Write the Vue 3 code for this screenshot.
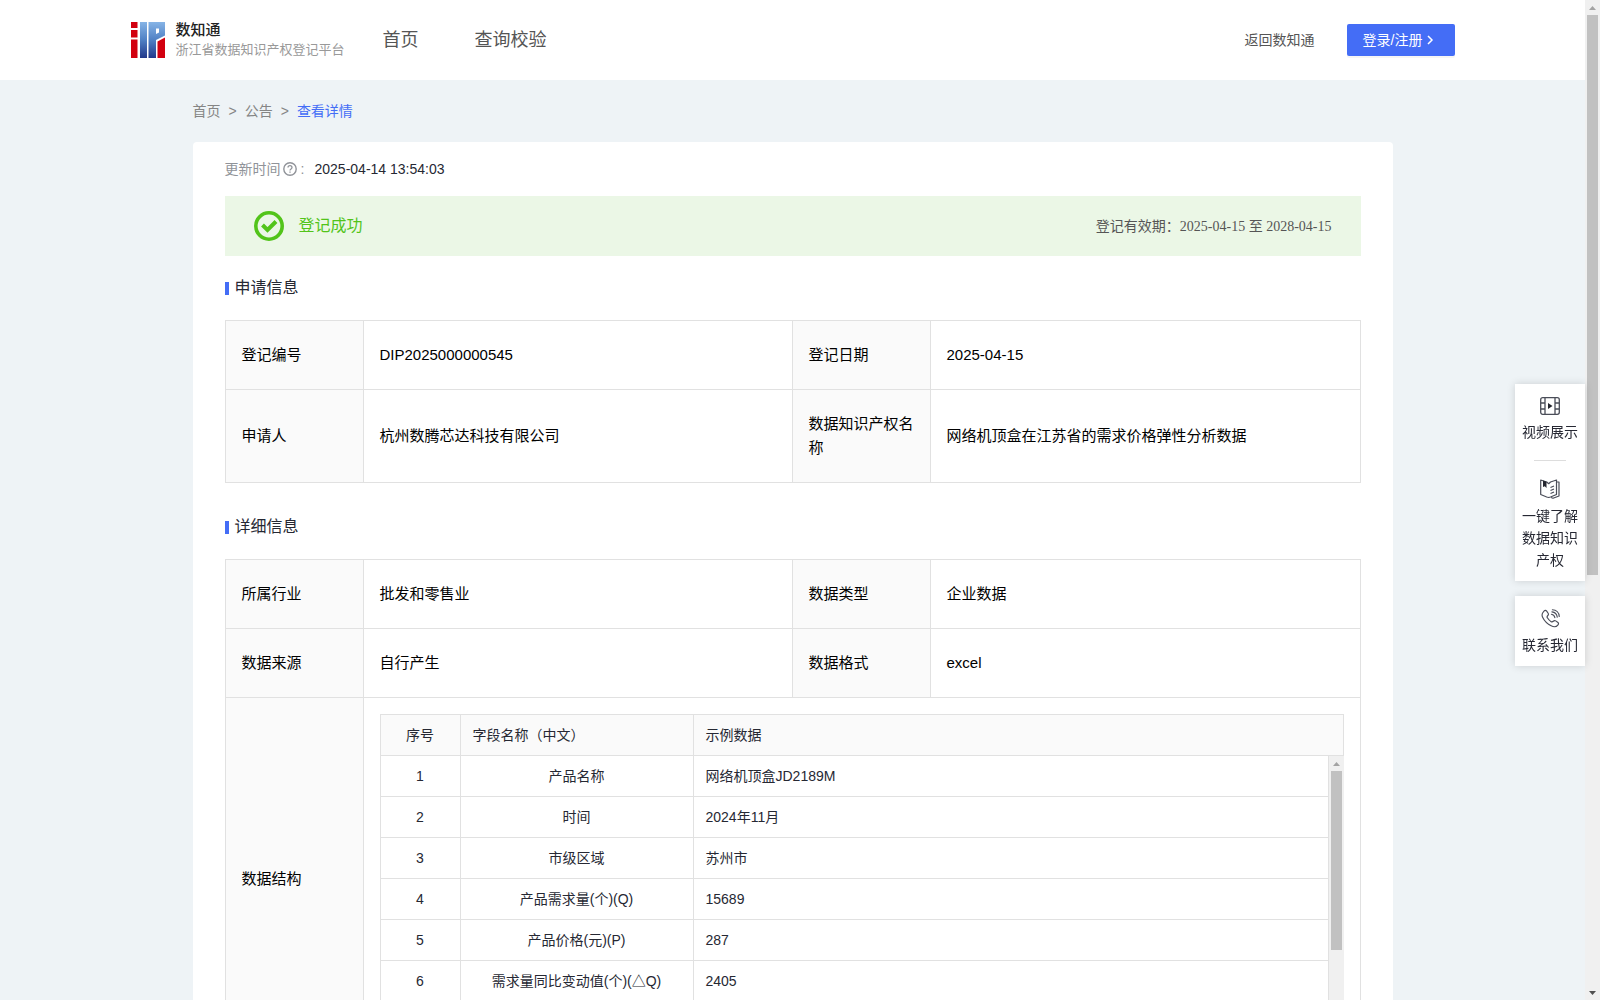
<script setup>
const applyRows = [
  [
    { label: '登记编号', value: 'DIP2025000000545' },
    { label: '登记日期', value: '2025-04-15' },
  ],
  [
    { label: '申请人', value: '杭州数腾芯达科技有限公司' },
    { label: '数据知识产权名称', value: '网络机顶盒在江苏省的需求价格弹性分析数据' },
  ],
]
const detailRows = [
  [
    { label: '所属行业', value: '批发和零售业' },
    { label: '数据类型', value: '企业数据' },
  ],
  [
    { label: '数据来源', value: '自行产生' },
    { label: '数据格式', value: 'excel' },
  ],
]
const fields = [
  ['产品名称', '网络机顶盒JD2189M'],
  ['时间', '2024年11月'],
  ['市级区域', '苏州市'],
  ['产品需求量(个)(Q)', '15689'],
  ['产品价格(元)(P)', '287'],
  ['需求量同比变动值(个)(△Q)', '2405'],
]
</script>

<template>
  <div class="shell">
    <div class="page">
      <header class="header">
        <div class="header-inner">
          <a class="brand" href="#">
            <svg class="logo" width="34" height="36" viewBox="0 0 34 36">
              <defs>
                <linearGradient id="blue" x1="0" y1="0" x2="0" y2="36" gradientUnits="userSpaceOnUse">
                  <stop offset="0" stop-color="#86b4e6" />
                  <stop offset="0.5" stop-color="#4f80c4" />
                  <stop offset="1" stop-color="#22388a" />
                </linearGradient>
              </defs>
              <path fill="#d2000f" d="M0 0h6.500v6H0zM0 8h6.500v7.500H0zM0 17.500h6.500V36H0zM26.500 19.500l7.500-4V36h-7.500z" />
              <path fill="url(#blue)" d="M9 0h7v36H9z" />
              <path fill="url(#blue)" d="M17.500 0H34v13.500l-9 4.500v18h-7.500z" />
              <path fill="#fff" d="M25 6.500h3v4L25 12z" />
            </svg>
            <span class="brand-text">
              <strong>数知通</strong>
              <span>浙江省数据知识产权登记平台</span>
            </span>
          </a>
          <nav class="nav">
            <a href="#">首页</a>
            <a href="#">查询校验</a>
          </nav>
          <a class="back" href="#">返回数知通</a>
          <button class="login" type="button">
            登录/注册
            <svg width="8" height="10" viewBox="0 0 8 10"><path d="M2 1l4 4-4 4" fill="none" stroke="#fff" stroke-width="1.500" /></svg>
          </button>
        </div>
      </header>

      <main class="main">
        <nav class="crumbs">
          <a href="#">首页</a><span>&gt;</span><a href="#">公告</a><span>&gt;</span><a class="current" href="#">查看详情</a>
        </nav>

        <section class="card">
          <div class="updated">
            <span class="muted">更新时间</span>
            <svg width="14" height="14" viewBox="0 0 14 14" fill="none" stroke="#909399">
              <circle cx="7" cy="7" r="6.200" stroke-width="1.400" />
              <path d="M5 5.600c0-2.600 4-2.600 4 0 0 1.400-2 1.400-2 3" stroke-width="1.300" />
              <path d="M7 9.600v1.200" stroke-width="1.300" />
            </svg>
            <span class="muted colon">:</span>
            <span>2025-04-14 13:54:03</span>
          </div>

          <div class="banner">
            <svg width="30" height="30" viewBox="0 0 30 30" fill="none" stroke="#52c41a">
              <circle cx="15" cy="15" r="13.200" stroke-width="3.600" />
              <path d="M8.500 14l5 5 8.500-8.500" stroke-width="4" />
            </svg>
            <span class="status">登记成功</span>
            <span class="validity">登记有效期：<span class="dates">2025-04-15 至 2028-04-15</span></span>
          </div>

          <h2 class="title">申请信息</h2>
          <table class="info">
            <colgroup><col class="c-label" /><col class="c-value" /><col class="c-label" /><col /></colgroup>
            <tbody>
              <tr v-for="(row, i) in applyRows" :key="i">
                <template v-for="cell in row" :key="cell.label">
                  <th scope="row">{{ cell.label }}</th>
                  <td>{{ cell.value }}</td>
                </template>
              </tr>
            </tbody>
          </table>

          <h2 class="title spaced">详细信息</h2>
          <table class="info">
            <colgroup><col class="c-label" /><col class="c-value" /><col class="c-label" /><col /></colgroup>
            <tbody>
              <tr v-for="(row, i) in detailRows" :key="i">
                <template v-for="cell in row" :key="cell.label">
                  <th scope="row">{{ cell.label }}</th>
                  <td>{{ cell.value }}</td>
                </template>
              </tr>
              <tr>
                <th scope="row">数据结构</th>
                <td class="nested" colspan="3">
                  <div class="fields-head">
                    <table class="fields">
                      <colgroup><col class="c-no" /><col class="c-name" /><col /></colgroup>
                      <thead>
                        <tr><th scope="col" class="center">序号</th><th scope="col">字段名称（中文）</th><th scope="col">示例数据</th></tr>
                      </thead>
                    </table>
                  </div>
                  <div class="fields-body">
                    <div class="fields-rows">
                      <table class="fields">
                        <colgroup><col class="c-no" /><col class="c-name" /><col /></colgroup>
                        <tbody>
                          <tr v-for="(f, i) in fields" :key="f[0]">
                            <td class="center">{{ i + 1 }}</td>
                            <td class="center">{{ f[0] }}</td>
                            <td>{{ f[1] }}</td>
                          </tr>
                        </tbody>
                      </table>
                    </div>
                    <div class="bar">
                      <svg width="15" height="15" viewBox="0 0 15 15"><path fill="#a3a3a3" d="M4 10h7L7.500 6z" /></svg>
                      <div class="thumb inner-thumb"></div>
                      <svg width="15" height="15" viewBox="0 0 15 15"><path fill="#505050" d="M4 6h7L7.500 10z" /></svg>
                    </div>
                  </div>
                </td>
              </tr>
            </tbody>
          </table>
        </section>
      </main>
    </div>

    <aside class="tools">
      <div class="tool-box">
        <a class="tool" href="#">
          <svg width="20" height="18" viewBox="0 0 20 18" fill="none" stroke="#4a4d58" stroke-width="1.300">
            <rect x="0.700" y="0.700" width="18.600" height="16.600" rx="2" />
            <path d="M5 1v16M15 1v16M1 6h4M1 12h4M15 6h4M15 12h4" />
            <path d="M8 6v6l4.500-3z" fill="#23252e" stroke="none" />
          </svg>
          <span>视频展示</span>
        </a>
        <hr />
        <a class="tool" href="#">
          <svg width="20" height="20" viewBox="0 0 20 20" fill="none" stroke="#4a4d58" stroke-width="1.200" stroke-linejoin="round">
            <path d="M.700 1l6 2 2 1.700L10.500 3l6-2v14.500l-6 2.500-1.800.500-2-.500-6-2.500z" />
            <path d="M17 3h2v14l-6 2.300-2-.800M10.500 8.500l3.500-1.500M10.500 11.500l3.500-1.500M10.500 14.500l3.500-1.500" />
            <path d="M3 1.500l3.500 1.200V9L4.800 7.300 3 8z" fill="#23252e" stroke="none" />
          </svg>
          <span>一键了解数据知识产权</span>
        </a>
      </div>
      <div class="tool-box">
        <a class="tool" href="#">
          <svg width="19" height="19" viewBox="0 0 20 20" fill="none" stroke="#4a4d58" stroke-width="1.200" stroke-linecap="round">
            <path d="M2.500 3C4 1 5 1 6 2.300l1.500 2.200c.700 1 .300 1.800-.500 2.600-.900.900-.900 1.300-.300 2.200 1 1.700 2.300 3 4 4 .900.500 1.400.400 2.200-.400.800-.800 1.600-1 2.600-.400l2 1.400c1.300.900 1.200 1.800.200 3-1.600 2-4 2.300-7 .800C6.500 15.600 3.500 12.500 1.700 8.700.700 6.500.900 4.700 2.500 3z" />
            <path d="M11 5.500c2 .300 3.300 1.600 3.600 3.600M11.500 3c3 .300 5.200 2.400 5.600 5.500M12 .800c4 .200 7 3 7.200 7" />
          </svg>
          <span>联系我们</span>
        </a>
      </div>
    </aside>

    <div class="bar page-bar">
      <svg width="15" height="15" viewBox="0 0 15 15"><path fill="#a3a3a3" d="M4 10h7L7.500 6z" /></svg>
      <div class="thumb page-thumb"></div>
      <svg width="15" height="15" viewBox="0 0 15 15"><path fill="#505050" d="M4 6h7L7.500 10z" /></svg>
    </div>
  </div>
</template>

<style>
body {
  margin: 0;
}
</style>

<style scoped>
* {
  box-sizing: border-box;
}
.shell {
  position: relative;
  display: flex;
  height: 100vh;
  font: 14px/22px "Liberation Sans", "Noto Sans CJK SC", sans-serif;
  color: #262833;
}
.page {
  flex: 1;
  min-width: 0;
  overflow-y: auto;
  scrollbar-width: none;
  background: #eef3f6;
}
a {
  color: inherit;
  text-decoration: none;
}
svg {
  flex: none;
  display: block;
}
.header {
  background: #fff;
}
.header-inner {
  display: flex;
  align-items: center;
  max-width: 1324px;
  height: 80px;
  margin: 0 auto;
}
.brand {
  display: flex;
  align-items: center;
  gap: 11px;
  width: 252px;
}
.brand-text {
  display: flex;
  flex-direction: column;
  font-size: 13px;
  line-height: 20px;
  color: #999;
  white-space: nowrap;
}
.brand-text strong {
  font-size: 15px;
  font-weight: 500;
  color: #222;
}
.nav {
  display: flex;
  gap: 56px;
  font-size: 18px;
  color: #555;
}
.back {
  margin-left: auto;
  color: #555;
}
.login {
  display: flex;
  align-items: center;
  gap: 4px;
  width: 108px;
  height: 32px;
  margin-left: 32px;
  padding: 0 16px;
  border: 0;
  border-radius: 2px;
  background: #446df6;
  box-shadow: 0 2px 0 rgba(0, 0, 0, 0.04);
  color: #fff;
  font: inherit;
  white-space: nowrap;
}
.main {
  max-width: 1200px;
  margin: 0 auto;
  padding-bottom: 120px;
}
.crumbs {
  display: flex;
  gap: 8px;
  padding: 20px 0;
  color: #858585;
}
.crumbs .current {
  color: #446df6;
}
.card {
  padding: 16px 32px 32px;
  border-radius: 4px;
  background: #fff;
}
.updated {
  display: flex;
  align-items: center;
  gap: 2px;
}
.muted {
  color: #909399;
}
.colon {
  width: 14px;
  padding-left: 2px;
}
.banner {
  display: flex;
  align-items: center;
  height: 60px;
  margin: 16px 0 21px;
  padding: 0 29px;
  background: #ebf7e6;
}
.status {
  margin-left: 15px;
  font-size: 16px;
  color: #52c41a;
}
.validity {
  margin-left: auto;
  color: #555;
}
.dates {
  font-family: "Liberation Serif", "Noto Sans CJK SC", serif;
}
.title {
  display: flex;
  align-items: center;
  gap: 6px;
  margin: 0 0 21px;
  font-size: 16px;
  font-weight: 400;
  line-height: 22px;
}
.title::before {
  content: "";
  width: 4px;
  height: 13px;
  background: #446df6;
}
.spaced {
  margin-top: 33px;
}
table {
  width: 100%;
  border-collapse: separate;
  border-spacing: 0;
  table-layout: fixed;
}
th {
  font-weight: 400;
  text-align: left;
  background: #fafafa;
}
.info {
  border: solid #e1e1e1;
  border-width: 1px 0 0 1px;
  font-size: 15px;
  line-height: 24px;
  color: #000;
}
.info > tbody > tr > * {
  padding: 22px 16px;
  border: solid #e1e1e1;
  border-width: 0 1px 1px 0;
}
.c-label {
  width: 138px;
}
.c-value {
  width: 429px;
}
.info > tbody > tr > .nested {
  padding: 16px;
}
.fields {
  border-left: 1px solid #e1e1e1;
  font-size: 14px;
  line-height: 24px;
  color: #262833;
}
.fields-head {
  border-top: 1px solid #e1e1e1;
}
.fields th,
.fields td {
  padding: 8px 12px;
  border: solid #e1e1e1;
  border-width: 0 1px 1px 0;
}
.fields .center {
  text-align: center;
}
.c-no {
  width: 80px;
}
.c-name {
  width: 233px;
}
.fields-body {
  display: flex;
  height: 287px;
}
.fields-rows {
  flex: 1;
  min-width: 0;
}
.bar {
  display: flex;
  flex-direction: column;
  align-items: center;
  flex: none;
  width: 15px;
  background: #f0f0f0;
}
.thumb {
  width: 11px;
  margin-bottom: auto;
  background: #c1c1c1;
}
.inner-thumb {
  height: 179px;
}
.page-thumb {
  height: 56%;
}
.tools {
  position: absolute;
  top: 384px;
  right: 15px;
  width: 70px;
}
.tool-box {
  margin-bottom: 15px;
  padding: 13px 7px 10px;
  background: #fff;
  box-shadow: 0 0 8px rgba(0, 0, 0, 0.15);
}
.tool {
  display: flex;
  flex-direction: column;
  align-items: center;
  gap: 6px;
  text-align: center;
}
.tool-box hr {
  width: 32px;
  height: 1px;
  margin: 17px auto 18px;
  border: 0;
  background: #ddd;
}
</style>
